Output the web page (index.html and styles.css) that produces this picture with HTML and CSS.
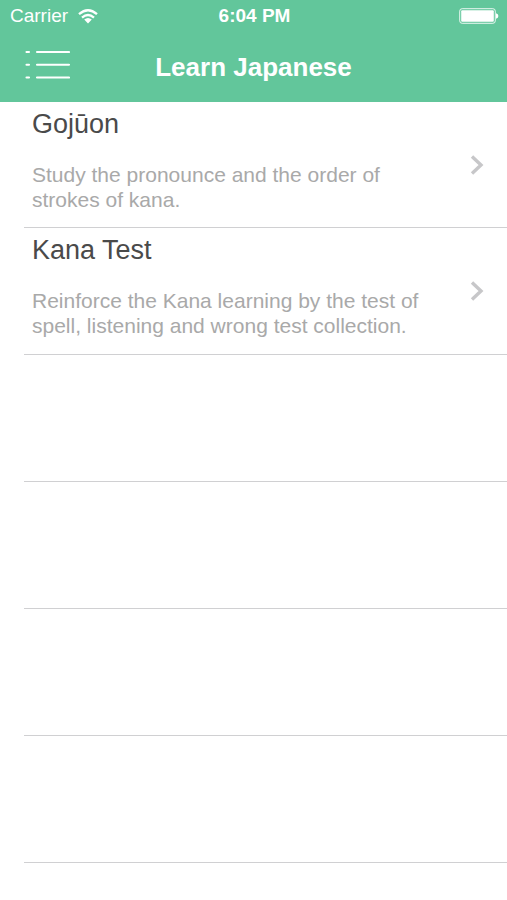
FILE: index.html
```html
<!DOCTYPE html>
<html lang="en">
<head>
<meta charset="utf-8">
<meta name="viewport" content="width=device-width, initial-scale=1">
<title>Learn Japanese</title>
<link rel="stylesheet" href="styles.css">
</head>
<body>
<header class="header">
  <div class="status">
    <div class="carrier">
      <span>Carrier</span>
      <svg class="wifi" viewBox="0 0 20 15" aria-hidden="true">
        <path d="M1 5.2Q10 -2.8 19 5.2M4 8.6Q10 3.4 16 8.6" fill="none" stroke="currentColor" stroke-width="2.3"/>
        <path d="M6.2 10.6Q10 7.4 13.8 10.6L10 14.4Z" fill="currentColor"/>
      </svg>
    </div>
    <time class="clock">6:04 PM</time>
    <svg class="battery" viewBox="0 0 40 16" aria-hidden="true">
      <rect x="0.7" y="0.7" width="35.6" height="14.6" rx="2.5" fill="none" stroke="currentColor" stroke-width="1" opacity="0.85"/>
      <rect x="2.2" y="2.2" width="32.6" height="11.6" rx="1" fill="currentColor"/>
      <path d="M37 5.2Q39.4 6 39.4 8T37 10.8Z" fill="currentColor"/>
    </svg>
  </div>
  <nav class="navbar">
    <button class="menu" type="button" aria-label="Menu">
      <svg class="menu-icon" viewBox="0 0 46 32" aria-hidden="true">
        <path d="M2.5 3H5M13 3H45M2.5 15.7H5M13 15.7H45M2.5 28.5H5M13 28.5H45" fill="none" stroke="currentColor" stroke-width="2.1" stroke-linecap="round"/>
      </svg>
    </button>
    <h1 class="title">Learn Japanese</h1>
  </nav>
</header>
<main>
  <ul class="list">
    <li class="row">
      <a class="link" href="#gojuon">
        <span class="text">
          <span class="name">Gojūon</span>
          <span class="detail">Study the pronounce and the order of strokes of kana.</span>
        </span>
        <svg class="chevron" viewBox="0 0 14 20" aria-hidden="true"><path d="M2 1.5L11 10L2 18.5" fill="none" stroke="currentColor" stroke-width="3.4"/></svg>
      </a>
    </li>
    <li class="row">
      <a class="link" href="#kana-test">
        <span class="text">
          <span class="name">Kana Test</span>
          <span class="detail">Reinforce the Kana learning by the test of spell, listening and wrong test collection.</span>
        </span>
        <svg class="chevron" viewBox="0 0 14 20" aria-hidden="true"><path d="M2 1.5L11 10L2 18.5" fill="none" stroke="currentColor" stroke-width="3.4"/></svg>
      </a>
    </li>
    <li class="row"></li>
    <li class="row"></li>
    <li class="row"></li>
    <li class="row"></li>
  </ul>
</main>
</body>
</html>
```
FILE: styles.css
```css
* {
  box-sizing: border-box;
}

body {
  margin: 0;
  background: #fff;
  font-family: "Liberation Sans", Arial, sans-serif;
}

.header {
  background: #62c69b;
  color: #fff;
}

.status {
  display: grid;
  grid-template-columns: 1fr auto 1fr;
  align-items: center;
  height: 32px;
  padding: 0 8px 0 10px;
  font-size: 19px;
  line-height: 24px;
}

.carrier {
  display: flex;
  align-items: center;
  gap: 10px;
}

.wifi {
  width: 20px;
  height: 15px;
}

.clock {
  font-weight: bold;
}

.battery {
  justify-self: end;
  width: 40px;
  height: 16px;
}

.navbar {
  display: grid;
  grid-template-columns: 1fr auto 1fr;
  align-items: center;
  height: 70px;
  padding: 0 24px;
}

.menu {
  justify-self: start;
  padding: 0 0 4px;
  border: 0;
  background: none;
  color: inherit;
}

.menu-icon {
  display: block;
  width: 46px;
  height: 32px;
}

.title {
  margin: 0;
  font-size: 26px;
  line-height: 32px;
}

.list {
  margin: 0;
  padding: 0 0 0 24px;
  list-style: none;
}

.row {
  height: 127px;
  border-bottom: 1px solid #d0d0d2;
}

.row:first-child {
  height: 126px;
}

.link {
  display: flex;
  align-items: center;
  justify-content: space-between;
  height: 100%;
  padding: 0 23px 0 8px;
  color: #4a4a4a;
  text-decoration: none;
}

.text {
  display: flex;
  flex-direction: column;
  gap: 22px;
  max-width: 410px;
  height: 100%;
  padding-top: 6px;
}

.name {
  font-size: 27px;
  line-height: 32px;
}

.detail {
  color: #a9a9a9;
  font-size: 21px;
  line-height: 25px;
}

.chevron {
  flex: none;
  width: 14px;
  height: 20px;
  color: #c7c7c9;
}
```
